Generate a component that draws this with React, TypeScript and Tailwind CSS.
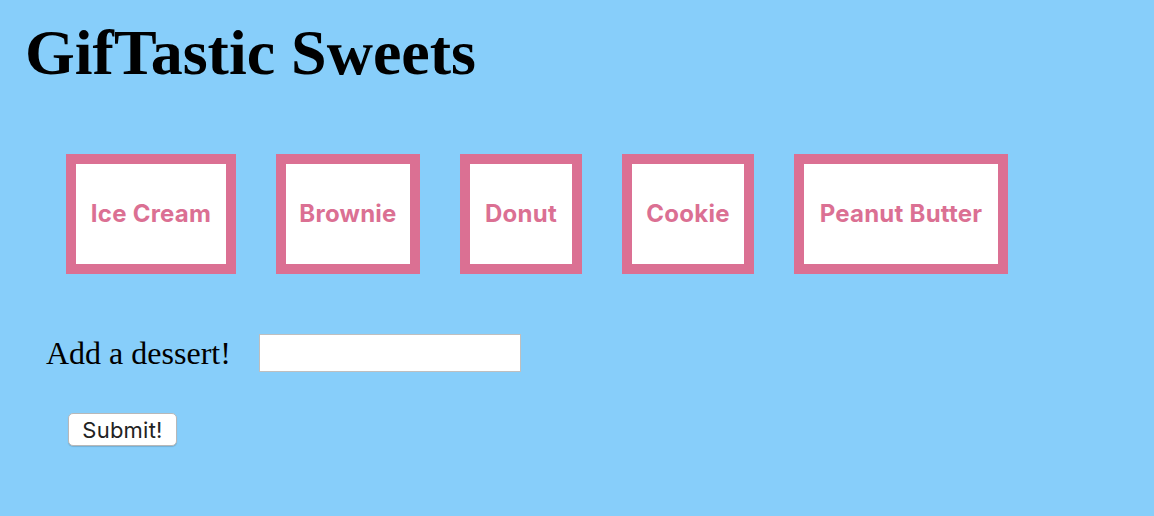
import React from "react";

const items = [
  { label: "Ice Cream", w: "w-[170px]" },
  { label: "Brownie", w: "w-[144px]" },
  { label: "Donut", w: "w-[122px]" },
  { label: "Cookie", w: "w-[132px]" },
  { label: "Peanut Butter", w: "w-[214px]" },
];

export default function App() {
  return (
    <div className="min-h-[516px] w-full bg-[#87CEFA] pt-[21px]">
      <h1 className="pl-[25px] font-['Liberation_Serif',serif] text-[64px] font-bold leading-none text-black">
        GifTastic Sweets
      </h1>
      <div className="mt-[69px] flex gap-[40px] pl-[66px]">
        {items.map((it) => (
          <button
            key={it.label}
            className={`${it.w} flex h-[120px] items-center justify-center border-[10px] border-[#DB7093] bg-white font-['Inter',sans-serif] text-[24px] font-bold tracking-[0.01em] text-[#DB7093]`}
          >
            {it.label}
          </button>
        ))}
      </div>
      <div className="mt-[60px] flex items-center pl-[46px]">
        <span className="font-['Liberation_Serif',serif] text-[32px] leading-none text-black">
          Add a dessert!
        </span>
        <input
          type="text"
          className="ml-[28px] h-[38px] w-[262px] border border-[#bfbfbf] bg-white outline-none"
        />
      </div>
      <div className="mt-[41px] pl-[68px]">
        <button className="flex h-[33px] w-[109px] items-center justify-center rounded-[5px] border border-[#b8b8b8] bg-white font-['Inter',sans-serif] text-[22px] leading-none tracking-[0.01em] text-[#222] shadow-[0_1px_1px_rgba(0,0,0,0.15)]">
          Submit!
        </button>
      </div>
    </div>
  );
}
